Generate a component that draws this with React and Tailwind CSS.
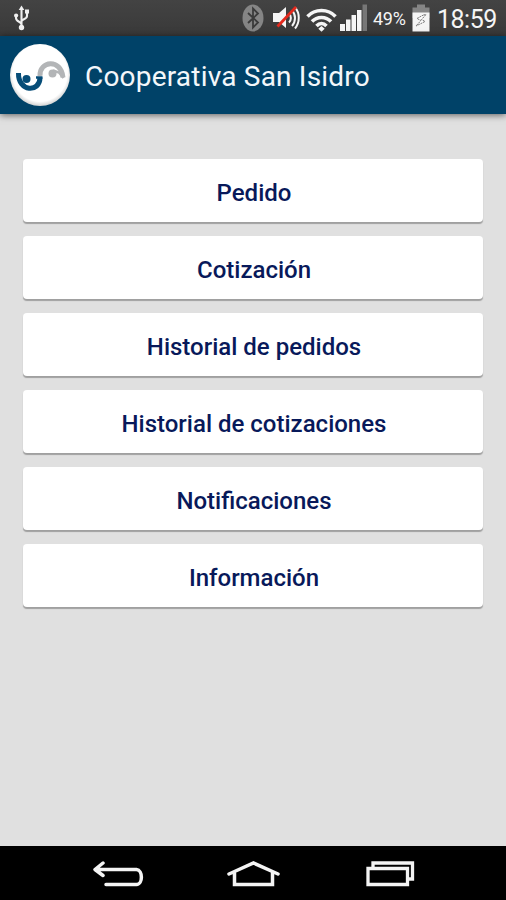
import React from 'react';

const MENU_ITEMS = [
  'Pedido',
  'Cotización',
  'Historial de pedidos',
  'Historial de cotizaciones',
  'Notificaciones',
  'Información',
];

const UsbIcon = () => (
  <svg className="w-4 h-[26px]" viewBox="0 0 16 26" fill="none" stroke="#f0f0f0" strokeWidth="2.1">
    <path d="M7.5 4v18M7.5 19.5C7.5 16.500 2 17 2 13v-2M7.500 16.500C7.500 14 13 14.500 13 11V7.500" />
    <path d="M7.500 0.500l2.800 4.500H4.700z" fill="#f0f0f0" stroke="none" />
    <circle cx="2.100" cy="10.500" r="2.100" fill="#f0f0f0" stroke="none" />
    <path d="M11 4.500h4v4h-4z" fill="#f0f0f0" stroke="none" />
    <circle cx="7.500" cy="22.500" r="2.700" fill="#f0f0f0" stroke="none" />
  </svg>
);

const BluetoothIcon = () => (
  <svg className="w-[22px] h-[28px]" viewBox="0 0 22 28">
    <ellipse cx="11" cy="14" rx="10.500" ry="13.500" fill="#858585" />
    <path d="M6 9l10 9.500-5 5V4.500l5 5L6 19" fill="none" stroke="#3b3b3b" strokeWidth="1.800" />
  </svg>
);

const MutedIcon = () => (
  <svg className="w-7 h-6" viewBox="0 0 28 24" fill="none">
    <path d="M1 7h6l7-6v21l-7-6H1z" fill="#f5f5f5" />
    <path d="M17 7.500c2.500 2.500 2.500 6.500 0 9M20 4.500c4 4 4 11 0 15.500M23 1.500c5 5.500 5 15 0 21" stroke="#f5f5f5" strokeWidth="2" />
    <path d="M5.500 20.500L24 1" stroke="#e3291d" strokeWidth="2.800" />
  </svg>
);

const WifiIcon = () => (
  <svg className="w-[31px] h-6" viewBox="0 0 31 24" fill="none" stroke="#f5f5f5" strokeWidth="3.500">
    <path d="M1.500 8.500C9 0.500 22 0.500 29.500 8.500M6 13.500c5-5.500 14-5.500 19 0M10.500 18c3-3.300 7-3.300 10 0" />
    <path d="M15.500 18l3.200 2.700-3.200 3-3.200-3z" fill="#f5f5f5" stroke="none" />
  </svg>
);

const SignalIcon = () => (
  <svg className="w-[27px] h-7" viewBox="0 0 27 28" fill="#f5f5f5">
    <path d="M0 20h5v7H0zM6 15.500h4.500V27H6zM11.500 11H16v16h-4.500zM17 6h4.500v21H17z" />
    <path d="M22.500 0.500H27V27h-4.500z" fill="#777" />
  </svg>
);

const BatteryIcon = () => (
  <svg className="w-[18px] h-7" viewBox="0 0 18 28">
    <path d="M5 0.500h8v3h4.500V14H0.500V3.500H5z" fill="#858585" />
    <path d="M0.500 8.500h17v19h-17z" fill="#f5f5f5" />
    <path d="M11.500 11L5 14.500l4 2-5 5.500 9-4.500-3.500-2 4.500-5z" fill="#fff" stroke="#777" strokeWidth="1" strokeDasharray="2 0.700" />
  </svg>
);

const Logo = () => (
  <svg className="w-[62px] h-[64px] shrink-0" viewBox="0 0 62 64" fill="none">
    <defs>
      <radialGradient id="disc" cx="0.5" cy="0.47" r="0.53">
        <stop offset="0.860" stopColor="#fff" />
        <stop offset="1" stopColor="#d2d2d2" />
      </radialGradient>
    </defs>
    <ellipse cx="31" cy="32" rx="30" ry="31" fill="url(#disc)" />
    <path d="M31 33c-1-15 21-18 23 1.500" stroke="#b3b5b7" strokeWidth="5" />
    <circle cx="43.500" cy="30.500" r="4" fill="#b3b5b7" />
    <path d="M44 27.500l6 2 4.500 5.500" stroke="#b3b5b7" strokeWidth="2.500" />
    <path d="M9.500 30C9 49 31 50 31 34.500" stroke="#064d78" strokeWidth="5" />
    <circle cx="17.500" cy="36" r="4" fill="#064d78" />
    <path d="M27 34.500h6.500" stroke="#064d78" strokeWidth="2.500" />
  </svg>
);

const StatusBar = () => (
  <div className="flex h-9 shrink-0 items-center bg-gradient-to-b from-[#434343] to-[#393939] pl-[14px] pr-[9px] text-[#f5f5f5]">
    <UsbIcon />
    <div className="ml-auto flex items-center">
      <BluetoothIcon />
      <div className="ml-2"><MutedIcon /></div>
      <div className="ml-[6px] pt-1"><WifiIcon /></div>
      <div className="ml-[3px]"><SignalIcon /></div>
      <span className="ml-[6px] w-[39px] pt-[2px] text-[18px] leading-6 tracking-[-0.3px]">49%</span>
      <BatteryIcon />
      <span className="ml-[7px] w-[60px] pt-[3px] text-[25px] leading-8 tracking-[-0.5px]">18:59</span>
    </div>
  </div>
);

const Header = () => (
  <header className="z-10 flex h-[78px] shrink-0 items-center bg-[#004268] pl-[9px] shadow-[0_1px_7px_rgba(0,0,0,0.6)]">
    <Logo />
    <h1 className="ml-[14px] pt-[3px] text-[28px] leading-8 tracking-[0.2px] text-[#f3f7fa]">Cooperativa San Isidro</h1>
  </header>
);

const NavBar = () => (
  <nav className="flex h-[54px] shrink-0 items-center bg-black pl-[93px] pt-[2px]">
    <svg className="w-[51px] h-[26px]" viewBox="0 0 51 26" fill="none" stroke="#f4f4f4" strokeWidth="3.500" strokeLinecap="round" strokeLinejoin="round">
      <path d="M10 2L2 8.500l8 6M2 8.500h41.500C50 9 50 23.500 43.500 23.500H13" />
    </svg>
    <svg className="ml-[83px] w-[53px] h-[26px]" viewBox="0 0 53 26" fill="none" stroke="#f4f4f4" strokeWidth="3.500" strokeLinecap="round">
      <path d="M2 13L26.500 2 51 13M7.500 12v11.500h38V12" />
    </svg>
    <svg className="ml-[86px] w-[49px] h-[26px]" viewBox="0 0 49 26" fill="none" stroke="#f4f4f4" strokeWidth="3.300">
      <path d="M2 7.500h39.500v16H2zM7 7V2h39.500v16H42" />
    </svg>
  </nav>
);

const App = () => {
  return (
    <div className="flex h-[900px] w-[506px] flex-col overflow-hidden bg-[#e0e0e0] font-['Roboto',sans-serif]">
      <StatusBar />
      <Header />
      <main className="flex flex-1 flex-col gap-[14px] pl-[23px] pr-[23px] pt-[45px]">
        {MENU_ITEMS.map((item) => (
          <button
            key={item}
            type="button"
            className="h-[63px] w-full rounded-[4px] bg-white pl-[2px] pt-[4px] text-[24px] font-medium leading-8 text-[#08195a] shadow-[0_2px_1px_#a0a0a0]"
          >
            {item}
          </button>
        ))}
      </main>
      <NavBar />
    </div>
  );
};

export default App;
